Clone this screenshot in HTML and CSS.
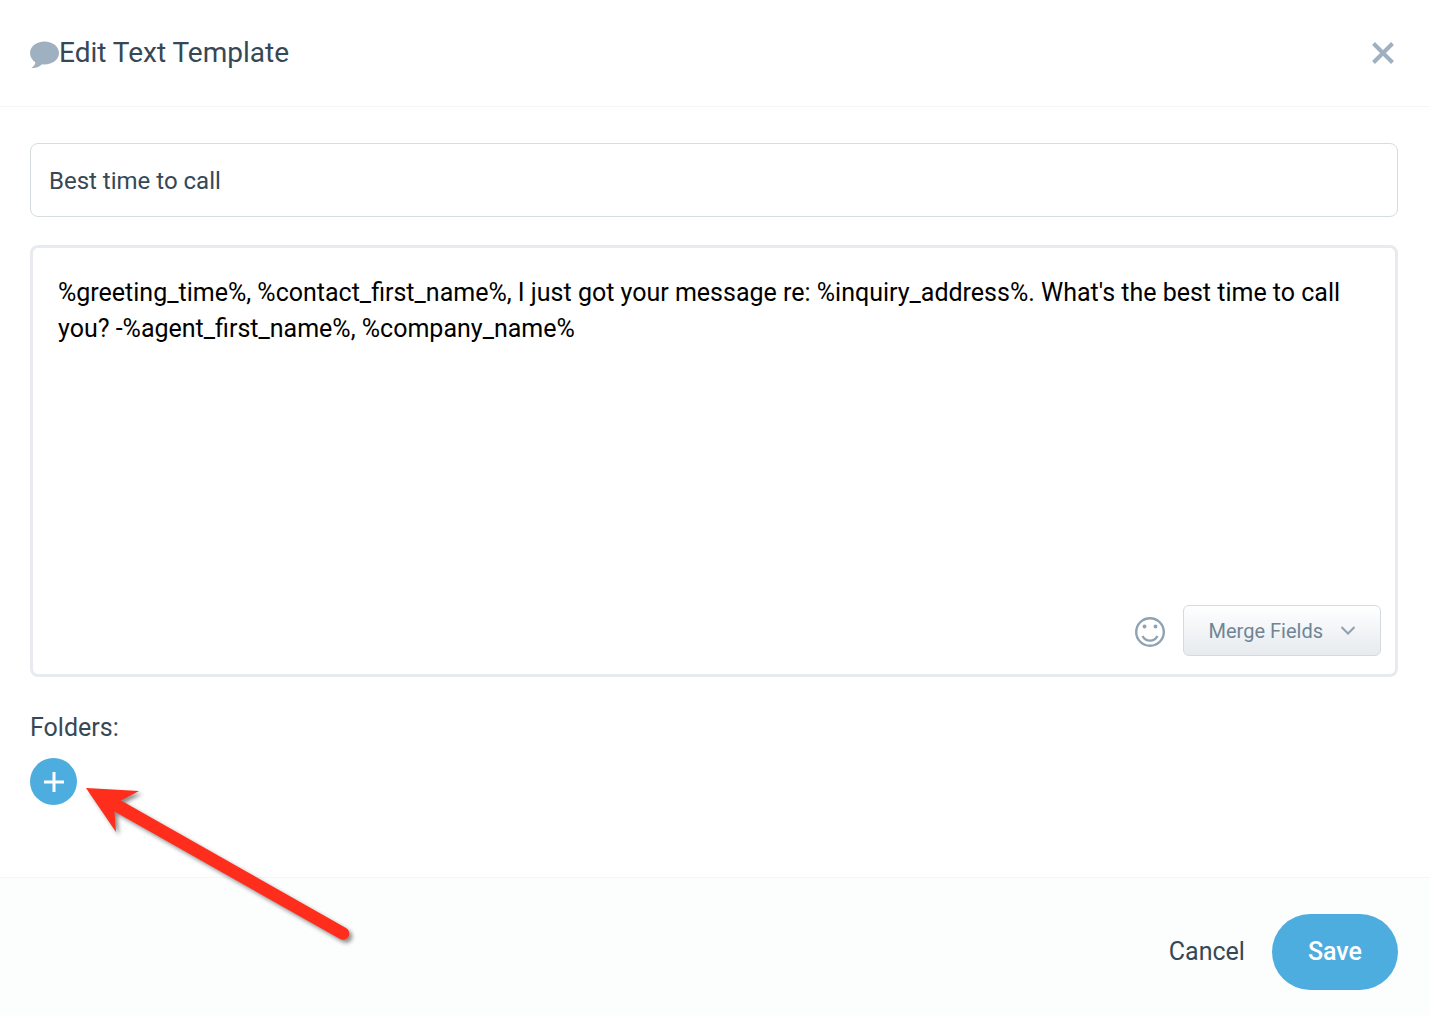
FILE: index.html
```
<!DOCTYPE html>
<html lang="en">
<head>
    <meta charset="UTF-8">
    <meta name="viewport" content="width=device-width, initial-scale=1.0">
    <title>Edit Text Template</title>
    <link rel="stylesheet" href="styles.css">
</head>
<body>
    <form class="modal">
        <header class="modal-header">
            <svg class="icon-bubble" viewBox="0 0 29 28" aria-hidden="true">
                <path d="M14.500 0.500C6.500 0.500 0 5.500 0 12c0 4 2.200 7.200 5.300 9.200 0 2.300-1.700 4.200-3.900 5.800 4.200.5 8.300-1.200 10.600-3.800.8.100 1.700.2 2.500.2C22.500 23.400 29 18.500 29 12S22.500 0.500 14.500 0.500z"/>
            </svg>
            <h1 class="title">Edit Text Template</h1>
            <button type="button" class="close" aria-label="Close">
                <svg viewBox="0 0 22 22" aria-hidden="true"><path d="M1.500 1.500l19 19M20.500 1.500l-19 19"/></svg>
            </button>
        </header>

        <main class="modal-body">
            <input type="text" class="name" aria-label="Template name" value="Best time to call">

            <div class="editor">
                <textarea class="message" rows="9" aria-label="Message" spellcheck="false">%greeting_time%, %contact_first_name%, I just got your message re: %inquiry_address%. What's the best time to call you? -%agent_first_name%, %company_name%</textarea>
                <div class="editor-tools">
                    <button type="button" class="emoji" aria-label="Insert emoji">
                        <svg viewBox="0 0 30 30" aria-hidden="true">
                            <circle class="line" cx="15" cy="15" r="13.800"/>
                            <path class="line" d="M7.500 19c1.700 3.200 4.300 4.600 7.500 4.600s5.800-1.400 7.500-4.600"/>
                            <circle cx="9.500" cy="9.500" r="1.900"/>
                            <circle cx="20.500" cy="9.500" r="1.900"/>
                        </svg>
                    </button>
                    <button type="button" class="merge">
                        Merge Fields
                        <svg viewBox="0 0 14 9" aria-hidden="true"><path d="M.5 1L7 7.500 13.500 1"/></svg>
                    </button>
                </div>
            </div>

            <h2 class="folders-title">Folders:</h2>
            <div class="folders">
                <button type="button" class="add" aria-label="Add folder">
                    <svg viewBox="0 0 20 20" aria-hidden="true"><path d="M10 0v20M0 10h20"/></svg>
                </button>
                <svg class="arrow" viewBox="0 0 270 160" aria-hidden="true">
                    <path d="M0 0L53 3 35 12.500 260 140a6.200 6.200 0 0 1-6 11L28.500 23.500 30 44z"/>
                </svg>
            </div>
        </main>

        <footer class="modal-footer">
            <button type="button" class="cancel">Cancel</button>
            <button type="submit" class="save">Save</button>
        </footer>
    </form>
</body>
</html>
```
FILE: styles.css
```
* {
    margin: 0;
    padding: 0;
    box-sizing: border-box;
}
body {
    font-family: Roboto, "Liberation Sans", sans-serif;
    font-size: 25px;
    line-height: 36px;
    color: #364856;
    background-color: #fff;
}
button, input, textarea {
    font: inherit;
    color: inherit;
}
button {
    border: none;
    background: none;
    cursor: pointer;
}
svg {
    display: block;
    fill: none;
}
.modal {
    display: flex;
    flex-direction: column;
    min-height: 100vh;
}

/* header */
.modal-header {
    display: flex;
    align-items: center;
    padding: 35px 36px 35px 30px;
    border-bottom: 1px solid #f5f6f7;
}
.icon-bubble {
    width: 29px;
    height: 28px;
    margin-top: 4px;
    fill: #9fb0c1;
}
.title {
    font-size: 28px;
    line-height: 36px;
    font-weight: 400;
}
.close {
    margin-left: auto;
}
.close svg {
    width: 22px;
    height: 22px;
    stroke: #9fb0c1;
    stroke-width: 4;
}

/* body */
.modal-body {
    flex: 1;
    padding: 36px 32px 36px 30px;
}
.name {
    display: block;
    width: 100%;
    height: 74px;
    padding: 2px 18px 0;
    border: 1px solid #d5dde0;
    border-radius: 8px;
    font-size: 24px;
}
.editor {
    margin-top: 28px;
    padding: 27px 14px 18px 25px;
    border: 3px solid #e7ebef;
    border-radius: 8px;
}
.message {
    display: block;
    width: 100%;
    padding-right: 24px;
    border: none;
    outline: none;
    resize: none;
    color: #000;
    background: none;
}
.editor-tools {
    display: flex;
    justify-content: flex-end;
    align-items: center;
    gap: 18px;
    margin-top: 6px;
}
.emoji {
    padding-top: 3px;
}
.emoji svg {
    width: 30px;
    height: 30px;
    fill: #8fa2b2;
}
.emoji .line {
    fill: none;
    stroke: #8fa2b2;
    stroke-width: 2.4;
}
.merge {
    display: flex;
    align-items: center;
    gap: 18px;
    height: 51px;
    padding: 0 25px;
    border: 1px solid #d3dbdf;
    border-radius: 6px;
    font-size: 20px;
    color: #6f8596;
    background-image: linear-gradient(#fff, #e6eaee);
}
.merge svg {
    width: 14px;
    height: 9px;
    stroke: #8fa2b2;
    stroke-width: 2;
}
.folders-title {
    margin-top: 33px;
    font-size: 25px;
    font-weight: 400;
}
.folders {
    position: relative;
    margin-top: 12px;
}
.add {
    display: flex;
    align-items: center;
    justify-content: center;
    width: 47px;
    height: 47px;
    border-radius: 50%;
    background-color: #4eaddf;
}
.add svg {
    width: 20px;
    height: 20px;
    stroke: #fff;
    stroke-width: 3;
}
.arrow {
    position: absolute;
    left: 56px;
    top: 30px;
    width: 270px;
    height: 160px;
    fill: #ff2d1c;
    overflow: visible;
    pointer-events: none;
    filter: drop-shadow(3px 3px 2px rgba(0, 0, 0, .45));
}

/* footer */
.modal-footer {
    display: flex;
    justify-content: flex-end;
    align-items: center;
    gap: 27px;
    padding: 36px 32px 26px;
    border-top: 1px solid #f3f5f6;
    background-color: #fcfdfd;
}
.save {
    height: 76px;
    padding: 0 36px;
    border-radius: 38px;
    font-weight: 500;
    color: #fff;
    background-color: #4eaddf;
}
```
